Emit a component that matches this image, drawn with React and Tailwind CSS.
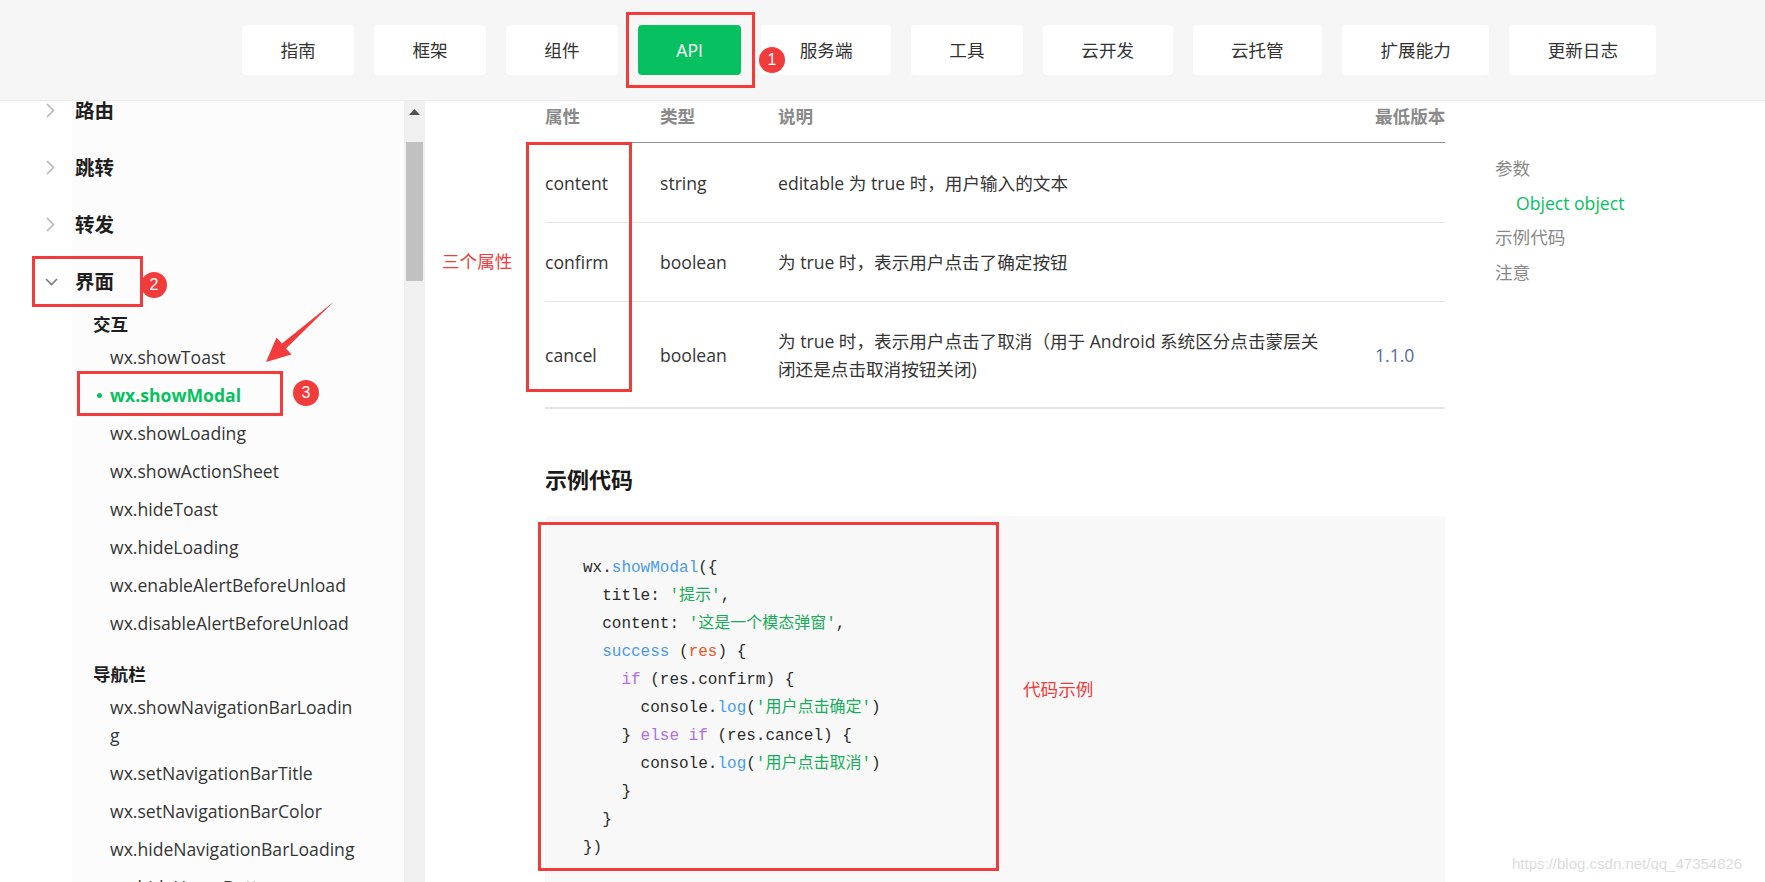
import React from "react";

const navs = ["指南", "框架", "组件", "API", "服务端", "工具", "云开发", "云托管", "扩展能力", "更新日志"];

const topItems = ["路由", "跳转", "转发"];

const groups = [
  {
    title: "交互",
    items: [
      "wx.showToast",
      "wx.showModal",
      "wx.showLoading",
      "wx.showActionSheet",
      "wx.hideToast",
      "wx.hideLoading",
      "wx.enableAlertBeforeUnload",
      "wx.disableAlertBeforeUnload",
    ],
  },
  {
    title: "导航栏",
    items: [
      "wx.showNavigationBarLoadin\ng",
      "wx.setNavigationBarTitle",
      "wx.setNavigationBarColor",
      "wx.hideNavigationBarLoading",
      "wx.hideHomeButton",
    ],
  },
];

const rows = [
  { name: "content", type: "string", desc: "editable 为 true 时，用户输入的文本", ver: "", h: "h-[80px]" },
  { name: "confirm", type: "boolean", desc: "为 true 时，表示用户点击了确定按钮", ver: "", h: "h-[79px]" },
  {
    name: "cancel",
    type: "boolean",
    desc: "为 true 时，表示用户点击了取消（用于 Android 系统区分点击蒙层关\n闭还是点击取消按钮关闭)",
    ver: "1.1.0",
    h: "h-[107px] border-b-2",
  },
];

function Chevron({ open }) {
  if (open)
    return (
      <svg width="13" height="8" viewBox="0 0 13 8" className="ml-[45px]">
        <path d="M1 1l5.5 5.5L12 1" fill="none" stroke="#7a7a7a" strokeWidth="1.6" />
      </svg>
    );
  return (
    <svg width="9" height="15" viewBox="0 0 9 15" className="ml-[46px]">
      <path d="M1 1l6.5 6.5L1 14" fill="none" stroke="#b5b5b5" strokeWidth="1.5" />
    </svg>
  );
}

const B = "text-[#4a9be8]";
const G = "text-[#19ad5b]";
const P = "text-[#b06fe8]";
const O = "text-[#e8562a]";

function Code() {
  const lines = [
    [["wx."], ["showModal", B], ["({"]],
    [["  title: "], ["'提示'", G], [","]],
    [["  content: "], ["'这是一个模态弹窗'", G], [","]],
    [["  "], ["success", B], [" ("], ["res", O], [") {"]],
    [["    "], ["if", P], [" (res.confirm) {"]],
    [["      console."], ["log", B], ["("], ["'用户点击确定'", G], [")"]],
    [["    } "], ["else if", P], [" (res.cancel) {"]],
    [["      console."], ["log", B], ["("], ["'用户点击取消'", G], [")"]],
    [["    }"]],
    [["  }"]],
    [["})"]],
  ];
  return (
    <pre className="mt-[22px] rounded-[4px] bg-[#f8f8f8] pb-[40px] pl-[38px] pt-[38px] font-['Liberation_Mono','Noto_Sans_CJK_SC',monospace] text-[16px] leading-[28px] text-[#2b2b2b]">
      {lines.map((ln, i) => (
        <div key={i}>
          {ln.map(([t, c], j) => (
            <span key={j} className={c}>
              {t}
            </span>
          ))}
        </div>
      ))}
    </pre>
  );
}

export default function App() {
  return (
    <div className="relative h-[882px] w-[1765px] overflow-hidden bg-white font-['Open_Sans','Noto_Sans_CJK_SC',sans-serif] text-[#353535]">
      <header className="flex h-[101px] items-center gap-[20px] border-b border-[#ebebeb] bg-[#f6f6f6] pl-[242px]">
        {navs.map((n) => (
          <div
            key={n}
            className={
              "flex h-[50px] items-center justify-center rounded-[4px] px-[38.4px] text-[17.6px] " +
              (n === "API" ? "bg-[#07c160] text-white" : "bg-white text-[#333]")
            }
          >
            {n}
          </div>
        ))}
      </header>

      <div className="flex h-[781px]">
        <aside className="flex w-[425px] overflow-hidden">
          <div className="w-[404px] overflow-hidden bg-[linear-gradient(to_right,#ffffff_72px,#fcfcfc_72px)]">
            <div className="-mt-[19px]">
              {topItems.map((t) => (
                <div key={t} className="flex h-[57px] items-center">
                  <Chevron />
                  <span className="ml-[20px] text-[19.5px] font-bold text-[#1f1f1f]">{t}</span>
                </div>
              ))}
              <div className="flex h-[57px] items-center">
                <Chevron open />
                <span className="ml-[17px] text-[19.5px] font-bold text-[#1f1f1f]">界面</span>
              </div>
              {groups.map((g, gi) => (
                <div key={g.title} className={gi > 0 ? "mt-[18px]" : ""}>
                  <div className="pl-[93px] text-[17.6px] font-bold leading-[28px] text-[#1f1f1f]">{g.title}</div>
                  {g.items.map((it) => {
                    const active = it === "wx.showModal";
                    return (
                      <div key={it} className="flex py-[5px] pl-[95px] text-[17.6px] leading-[28px]">
                        <span className="flex h-[28px] w-[15px] shrink-0 items-center">
                          {active && <span className="ml-[2px] h-[5px] w-[5px] rounded-full bg-[#07c160]" />}
                        </span>
                        <span
                          className={
                            "whitespace-pre-line " + (active ? "font-bold text-[#07c160]" : "text-[#353535]")
                          }
                        >
                          {it}
                        </span>
                      </div>
                    );
                  })}
                </div>
              ))}
            </div>
          </div>
          <div className="w-[21px] bg-[#f0f0f0]">
            <svg width="11" height="6" viewBox="0 0 11 6" className="ml-[5px] mt-[8px]">
              <path d="M0 6L5.5 0L11 6z" fill="#505050" />
            </svg>
            <div className="ml-[2px] mt-[27px] h-[139px] w-[17px] bg-[#c1c1c1]" />
          </div>
        </aside>

        <main className="flex pl-[120px]">
          <div className="w-[900px]">
            <div className="grid h-[42px] grid-cols-[115px_118px_597px_70px] border-b border-[#8f8f8f] pt-[1px] text-[17.6px] font-bold leading-[28px] text-[#8a8a8a]">
              <div>属性</div>
              <div>类型</div>
              <div>说明</div>
              <div className="whitespace-nowrap">最低版本</div>
            </div>
            {rows.map((r) => (
              <div
                key={r.name}
                className={
                  "grid grid-cols-[115px_118px_597px_70px] items-center border-b border-[#e5e5e5] text-[17.6px] leading-[28px] " +
                  r.h
                }
              >
                <div>{r.name}</div>
                <div>{r.type}</div>
                <div className="whitespace-pre-line">{r.desc}</div>
                <div className="text-[#576b95]">{r.ver}</div>
              </div>
            ))}
            <h2 className="mt-[55px] text-[22px] font-bold leading-[30px] text-[#1a1a1a]">示例代码</h2>
            <Code />
          </div>

          <nav className="ml-[50px] mt-[50px] whitespace-nowrap text-[17.6px] leading-[34.5px] text-[#888]">
            <div>参数</div>
            <div className="pl-[21px] text-[#07c160]">Object object</div>
            <div>示例代码</div>
            <div>注意</div>
          </nav>
        </main>
      </div>

      {/* annotations */}
      <div className="absolute left-[626px] top-[12px] h-[76px] w-[129px] border-[3px] border-[#f23b3b]" />
      <div className="absolute left-[32px] top-[256px] h-[51px] w-[111px] border-[3px] border-[#f23b3b]" />
      <div className="absolute left-[77px] top-[371px] h-[45px] w-[206px] border-[3px] border-[#f23b3b]" />
      <div className="absolute left-[526px] top-[142px] h-[250px] w-[106px] border-[3px] border-[#f23b3b]" />
      <div className="absolute left-[538px] top-[522px] h-[349px] w-[461px] border-[3px] border-[#f23b3b]" />

      {[
        ["1", "left-[759px] top-[47px]"],
        ["2", "left-[141px] top-[272px]"],
        ["3", "left-[293px] top-[380px]"],
      ].map(([n, pos]) => (
        <div
          key={n}
          className={
            "absolute flex h-[26px] w-[26px] items-center justify-center rounded-full bg-[#f23b3b] font-['Liberation_Sans',sans-serif] text-[16px] text-white " +
            pos
          }
        >
          {n}
        </div>
      ))}

      <div className="absolute left-[442px] top-[247px] text-[17.6px] leading-[28px] text-[#f23b3b]">三个属性</div>
      <div className="absolute left-[1023px] top-[675px] text-[17.6px] leading-[28px] text-[#f23b3b]">代码示例</div>

      <svg className="pointer-events-none absolute left-0 top-0" width="1765" height="882">
        <polygon
          points="334,301.5 286,348.5 291.5,354.5 266,362 276.5,337.5 282,343.5"
          fill="#f23b3b"
        />
      </svg>

      <div className="absolute left-[1512px] top-[853px] font-['Liberation_Sans',sans-serif] text-[15px] leading-[22px] text-[#dcdcdc]">
        https://blog.csdn.net/qq_47354826
      </div>
    </div>
  );
}
